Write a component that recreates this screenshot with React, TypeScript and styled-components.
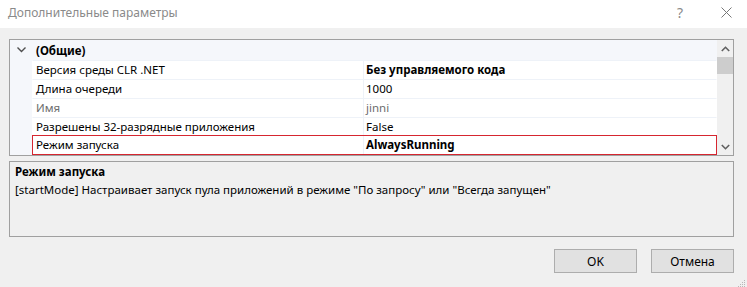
import styled, {createGlobalStyle} from "styled-components";

const GlobalStyle = createGlobalStyle`
  html, body {
    margin: 0;
    padding: 0;
    background: #F0F0F0;
  }
  body {
    font-family: "Noto Sans", "Open Sans", sans-serif;
    font-size: 11.5px;
    color: #000;
  }
`

type Row = {
    name: string
    value: string
    bold?: boolean
    muted?: boolean
    selected?: boolean
}

const rows: Row[] = [
    {name: 'Версия среды CLR .NET', value: 'Без управляемого кода', bold: true},
    {name: 'Длина очереди', value: '1000'},
    {name: 'Имя', value: 'jinni', muted: true},
    {name: 'Разрешены 32-разрядные приложения', value: 'False'},
    {name: 'Режим запуска', value: 'AlwaysRunning', bold: true, selected: true},
]

const App = () => {
    return (
        <>
            <GlobalStyle/>
            <Dialog>
                <TitleBar>
                    <Title>Дополнительные параметры</Title>
                    <TitleButtons>
                        <TitleButton width={50}>?</TitleButton>
                        <TitleButton width={42}>
                            <svg width="11" height="11" viewBox="0 0 11 11">
                                <path d="M0.5 0.5 L10.5 10.5 M10.5 0.5 L0.5 10.5" stroke="#777" strokeWidth="1"/>
                            </svg>
                        </TitleButton>
                    </TitleButtons>
                </TitleBar>
                <Body>
                    <Grid>
                        <GridContent>
                            <CategoryRow>
                                <Gutter>
                                    <svg width="9" height="6" viewBox="0 0 9 6">
                                        <path d="M0.5 0.5 L4.5 4.5 L8.5 0.5" fill="none" stroke="#505050" strokeWidth="1.4"/>
                                    </svg>
                                </Gutter>
                                <CategoryName>(Общие)</CategoryName>
                            </CategoryRow>
                            {rows.map((row) => (
                                <PropRow key={row.name}>
                                    <Gutter/>
                                    <PropCells selected={row.selected}>
                                        <NameCell muted={row.muted}>{row.name}</NameCell>
                                        <ValueCell bold={row.bold} muted={row.muted}>{row.value}</ValueCell>
                                    </PropCells>
                                </PropRow>
                            ))}
                        </GridContent>
                        <ScrollBar>
                            <ScrollArrow>
                                <svg width="9" height="6" viewBox="0 0 9 6">
                                    <path d="M0.8 5 L4.5 1.3 L8.2 5" fill="none" stroke="#606060" strokeWidth="1.6"/>
                                </svg>
                            </ScrollArrow>
                            <ScrollTrack>
                                <ScrollThumb/>
                            </ScrollTrack>
                            <ScrollArrow>
                                <svg width="9" height="6" viewBox="0 0 9 6">
                                    <path d="M0.8 1 L4.5 4.7 L8.2 1" fill="none" stroke="#606060" strokeWidth="1.6"/>
                                </svg>
                            </ScrollArrow>
                        </ScrollBar>
                    </Grid>
                    <Description>
                        <DescTitle>Режим запуска</DescTitle>
                        <DescText>[startMode] Настраивает запуск пула приложений в режиме "По запросу" или "Всегда запущен"</DescText>
                    </Description>
                    <Footer>
                        <DialogButton>OK</DialogButton>
                        <DialogButton>Отмена</DialogButton>
                    </Footer>
                </Body>
                <Grip>
                    <svg width="10" height="10" viewBox="0 0 10 10">
                        {[[8, 2], [6, 4], [8, 4], [4, 6], [6, 6], [8, 6], [2, 8], [4, 8], [6, 8], [8, 8]].map(([x, y]) => (
                            <rect key={`${x}-${y}`} x={x} y={y} width="1" height="1" fill="#b8b8b8"/>
                        ))}
                    </svg>
                </Grip>
            </Dialog>
        </>
    );
};

const Dialog = styled.div`
  position: relative;
  width: 747px;
  height: 287px;
  background: #F0F0F0;
  overflow: hidden;
`
const TitleBar = styled.div`
  height: 28px;
  background: #fff;
  display: flex;
  align-items: center;
  justify-content: space-between;
  padding-left: 8px;
`
const Title = styled.div`
  color: #8a8a8a;
  font-size: 12px;
  margin-top: -4px;
`
const TitleButtons = styled.div`
  display: flex;
  height: 100%;
`
const TitleButton = styled.div<{width: number}>`
  width: ${({width}) => width}px;
  display: flex;
  justify-content: center;
  align-items: center;
  color: #8a8a8a;
  font-size: 14px;
  margin-top: -4px;
`
const Body = styled.div`
  padding: 11px 13px 0 9px;
  display: flex;
  flex-direction: column;
`
const Grid = styled.div`
  height: 115px;
  border: 1px solid #A0A0A0;
  background: #fff;
  display: flex;
`
const GridContent = styled.div`
  flex: 1;
  display: flex;
  flex-direction: column;
`
const CategoryRow = styled.div`
  height: 20px;
  display: flex;
  align-items: center;
  background: #F5F7FB;
`
const Gutter = styled.div`
  width: 21px;
  align-self: stretch;
  flex-shrink: 0;
  background: #F5F7FB;
  display: flex;
  align-items: center;
  justify-content: center;
  padding-left: 1px;
`
const CategoryName = styled.div`
  font-weight: 700;
  padding-left: 4px;
`
const PropRow = styled.div`
  height: 19px;
  display: flex;
`
const PropCells = styled.div<{selected?: boolean}>`
  flex: 1;
  display: grid;
  grid-template-columns: 331px 1fr;
  box-sizing: border-box;
  border-top: 1px solid ${({selected}) => selected ? '#D62630' : '#EEF2F8'};
  border-bottom: 1px solid ${({selected}) => selected ? '#D62630' : 'transparent'};
  border-left: 1px solid ${({selected}) => selected ? '#D62630' : 'transparent'};
  border-right: 1px solid ${({selected}) => selected ? '#D62630' : 'transparent'};
  height: ${({selected}) => selected ? '20px' : '19px'};
  margin-top: ${({selected}) => selected ? '-1px' : '0'};
`
const NameCell = styled.div<{muted?: boolean}>`
  padding-left: 3px;
  line-height: 18px;
  white-space: nowrap;
  color: ${({muted}) => muted ? '#6D6D6D' : '#000'};
  border-right: 1px solid #EEF2F8;
`
const ValueCell = styled.div<{bold?: boolean, muted?: boolean}>`
  padding-left: 2px;
  line-height: 18px;
  white-space: nowrap;
  font-weight: ${({bold}) => bold ? 700 : 400};
  color: ${({muted}) => muted ? '#6D6D6D' : '#000'};
`
const ScrollBar = styled.div`
  width: 16px;
  display: flex;
  flex-direction: column;
  background: #F0F0F0;
`
const ScrollArrow = styled.div`
  height: 17px;
  display: flex;
  align-items: center;
  justify-content: center;
`
const ScrollTrack = styled.div`
  flex: 1;
`
const ScrollThumb = styled.div`
  height: 17px;
  background: #CDCDCD;
`
const Description = styled.div`
  margin-top: 5px;
  height: 71px;
  border: 1px solid #A0A0A0;
  padding: 1px 5px 2px;
`
const DescTitle = styled.div`
  font-weight: 700;
  line-height: 18px;
`
const DescText = styled.div`
  line-height: 18px;
`
const Footer = styled.div`
  margin-top: 12px;
  display: flex;
  justify-content: flex-end;
  gap: 14px;
`
const DialogButton = styled.button`
  width: 83px;
  height: 24px;
  background: #E1E1E1;
  border: 1px solid #ADADAD;
  font-family: inherit;
  font-size: 12px;
  color: #000;
  padding: 0;
`
const Grip = styled.div`
  position: absolute;
  right: 1px;
  bottom: 1px;
  width: 10px;
  height: 10px;
`

export default App;
